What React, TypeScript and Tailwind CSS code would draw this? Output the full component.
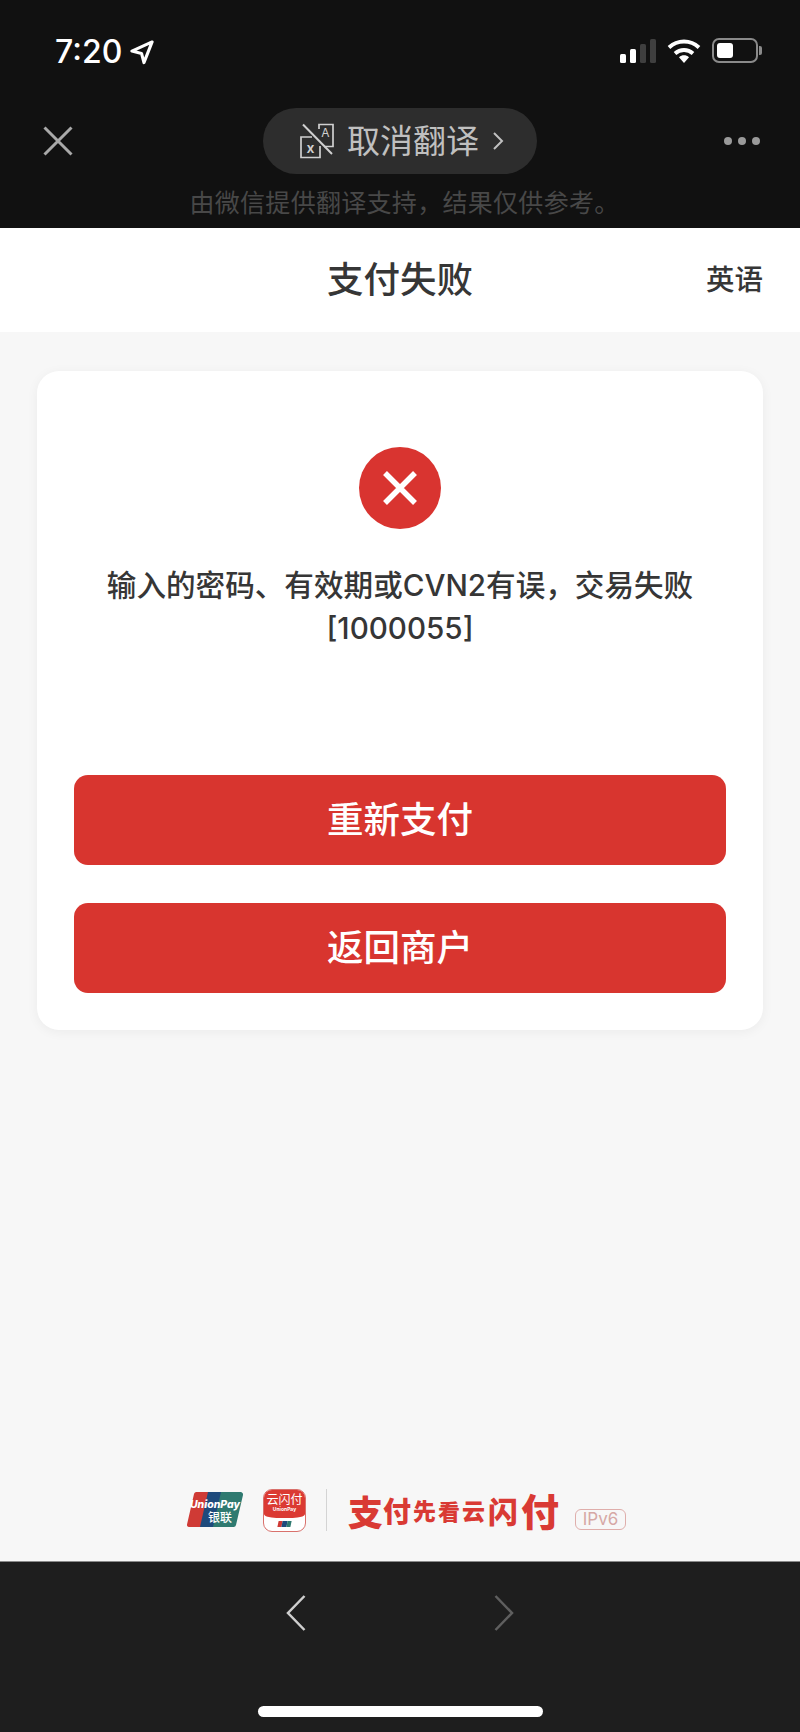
const cjk = "font-['Inter','Noto_Sans_CJK_SC',sans-serif]";

function LocationArrow() {
  return (
    <svg width="25" height="25" viewBox="0 0 26 26" fill="none" className="ml-[8px]">
      <path d="M23 2 2 11.500 12 14l2.500 9.500z" stroke="#fff" strokeWidth="3.200" strokeLinejoin="round" />
    </svg>
  );
}

function StatusIcons() {
  return (
    <div className="flex items-center">
      <svg width="36" height="24" viewBox="0 0 36 24">
        <rect x="0" y="15" width="6" height="9" rx="1.500" fill="#fff" />
        <rect x="10" y="10" width="6" height="14" rx="1.500" fill="#fff" />
        <rect x="20" y="5" width="6" height="19" rx="1.500" fill="#3f3f3f" />
        <rect x="30" y="0" width="6" height="24" rx="1.500" fill="#3f3f3f" />
      </svg>
      <svg width="34" height="25" viewBox="0 0 34 25" fill="none" className="ml-[11px]">
        <path d="M2 9.500C10.500 1.500 23.500 1.500 32 9.500" stroke="#fff" strokeWidth="3.800" />
        <path d="M8 15.500c5.200-4.700 12.800-4.700 18 0" stroke="#fff" strokeWidth="3.800" />
        <path d="M12 19.200c3-2.500 7-2.500 10 0L17 25z" fill="#fff" />
      </svg>
      <div className="ml-[11px] flex items-center">
        <div className="h-[25px] w-[46px] rounded-[7px] border-2 border-[#8a8a8a] p-[3px]">
          <div className="h-full w-[16px] rounded-[3px] bg-white" />
        </div>
        <div className="ml-[1px] h-[9px] w-[3px] rounded-r-[2px] bg-[#8a8a8a]" />
      </div>
    </div>
  );
}

function TranslateOff() {
  return (
    <svg width="34" height="36" viewBox="0 0 34 36" fill="none" stroke="#d0d0d0" strokeWidth="1.700">
      <path d="M19 6V1.500h14v22H24" />
      <path d="M12 14H1v20.500h19V23" />
      <path d="M3 1.500 32 31" strokeWidth="2" />
      <text x="25.500" y="14" fill="#d0d0d0" stroke="none" fontSize="12" textAnchor="middle" fontFamily="Inter, sans-serif">A</text>
      <text x="10.500" y="30" fill="#d0d0d0" stroke="none" fontSize="14" fontWeight="600" textAnchor="middle" fontFamily="Inter, sans-serif">x</text>
    </svg>
  );
}

function UnionPayMark() {
  return (
    <svg width="56" height="36" viewBox="0 0 56 36" className="shrink-0">
      <path d="M9 0h16l-8 35H2a2 2 0 0 1-2-2.500L7 2a2.500 2.500 0 0 1 2-2z" fill="#cf3a35" />
      <path d="M21 0h17l-8 35H13z" fill="#1e4a7c" />
      <path d="M34 0h19.500A2.500 2.500 0 0 1 56 3l-7 30a2.500 2.500 0 0 1-2.500 2H26z" fill="#2f7a70" />
      <text x="28" y="16" fill="#fff" fontSize="10.500" fontWeight="800" fontStyle="italic" textAnchor="middle" fontFamily="Inter, sans-serif">UnionPay</text>
      <text x="33" y="30" fill="#fff" fontSize="12" fontWeight="500" textAnchor="middle" fontFamily="'Noto Sans CJK SC', sans-serif">银联</text>
    </svg>
  );
}

function CloudPayMark() {
  return (
    <div className="ml-[20px] flex h-[43px] w-[43px] shrink-0 flex-col overflow-hidden rounded-[9px] border border-[#d9716c] bg-white">
      <div className="flex h-[28px] flex-col items-center rounded-b-[30%_14%] bg-[#db3a33] pt-[2px] text-white">
        <span className="text-[12px] leading-[14px] font-['Noto_Sans_CJK_SC',sans-serif]">云闪付</span>
        <span className="text-[5px] leading-[7px] font-bold font-['Inter',sans-serif]">UnionPay</span>
      </div>
      <div className="flex flex-1 items-center justify-center">
        <div className="flex h-[6px] w-[13px] -skew-x-12">
          <span className="flex-1 bg-[#cf3a35]" />
          <span className="flex-1 bg-[#1e4a7c]" />
          <span className="flex-1 bg-[#2f7a70]" />
        </div>
      </div>
    </div>
  );
}

export default function App() {
  return (
    <div className={`flex h-[1732px] w-[800px] flex-col overflow-hidden bg-[#f7f7f7] ${cjk}`}>
      <header className="flex h-[228px] shrink-0 flex-col bg-[#111111]">
        <div className="flex h-[104px] items-start justify-between pr-[38px] pl-[55px] pt-[35px]">
          <div className="flex items-center">
            <span className="text-[32px] leading-[34px] font-medium text-white">7:20</span>
            <LocationArrow />
          </div>
          <div className="pt-[3px]">
            <StatusIcons />
          </div>
        </div>
        <div className="grid grid-cols-[1fr_auto_1fr] items-center px-[40px] pt-[4px]">
          <svg width="30" height="30" viewBox="0 0 30 30" stroke="#a9a9a9" strokeWidth="3" className="ml-[3px]">
            <path d="M1.500 1.500 28.500 28.500M28.500 1.500 1.500 28.500" />
          </svg>
          <div className="flex h-[66px] w-[274px] items-center rounded-full bg-[#2d2d2d] pl-[37px]">
            <TranslateOff />
            <span className="ml-[13px] text-[33px] leading-[40px] text-[#c0c0c0]">取消翻译</span>
            <svg width="12" height="20" viewBox="0 0 12 20" fill="none" stroke="#c0c0c0" strokeWidth="2" className="ml-[13px]">
              <path d="m2 2 8 8-8 8" />
            </svg>
          </div>
          <div className="flex justify-end gap-[6px]">
            <span className="h-[8px] w-[8px] rounded-full bg-[#9a9a9a]" />
            <span className="h-[8px] w-[8px] rounded-full bg-[#9a9a9a]" />
            <span className="h-[8px] w-[8px] rounded-full bg-[#9a9a9a]" />
          </div>
        </div>
        <p className="pt-[12px] pl-[9px] text-center text-[25px] leading-[34px] tracking-[0.3px] text-[#484848]">由微信提供翻译支持，结果仅供参考。</p>
      </header>

      <div className="grid h-[104px] shrink-0 grid-cols-[1fr_auto_1fr] items-center bg-white px-[37px]">
        <span />
        <h1 className="pt-[1px] text-[36.500px] font-medium text-[#363636]">支付失败</h1>
        <span className="justify-self-end pt-[1px] text-[28.500px] font-medium text-[#363636]">英语</span>
      </div>

      <main className="flex flex-1 flex-col px-[37px] pt-[39px]">
        <section className="flex h-[659px] flex-col items-center rounded-[22px] bg-white px-[37px] pt-[76px] shadow-[0_2px_12px_rgba(0,0,0,0.05)]">
          <div className="flex h-[82px] w-[82px] items-center justify-center rounded-full bg-[#d93430]">
            <svg width="36" height="36" viewBox="0 0 36 36" stroke="#fff" strokeWidth="5.500">
              <path d="M3 3 33 33M33 3 3 33" />
            </svg>
          </div>
          <p className="mt-[35px] w-full text-center text-[29.600px] leading-[43px] font-medium text-[#363636]">
            输入的密码、有效期或CVN2有误，交易失败
            <br />
            [1000055]
          </p>
          <button className="mt-[125px] h-[90px] w-full rounded-[14px] bg-[#d8352f] pt-[1px] text-[36.500px] font-medium text-white">重新支付</button>
          <button className="mt-[38px] h-[90px] w-full rounded-[14px] bg-[#d8352f] text-[36.500px] font-medium text-white">返回商户</button>
        </section>

        <div className="mt-auto mb-[29px] flex items-center pl-[150px]">
          <UnionPayMark />
          <CloudPayMark />
          <div className="ml-[20px] h-[42px] w-[1px] bg-[#d4d4d4]" />
          <div className="ml-[21px] flex h-[44px] w-[211px] items-center font-['Noto_Sans_CJK_SC',sans-serif] font-black text-[#d93a34]">
            <span className="text-[35px] leading-none">支</span>
            <span className="text-[28px] leading-none">付</span>
            <span className="ml-[2px] text-[23px] leading-none">先</span>
            <span className="ml-[2px] text-[22px] leading-none">看</span>
            <span className="ml-[2px] text-[23px] leading-none">云</span>
            <span className="ml-[3px] text-[30px] leading-none">闪</span>
            <span className="ml-[3px] text-[38px] leading-none">付</span>
          </div>
          <div className="mt-[18px] ml-[16px] flex h-[21px] w-[51px] items-center justify-center rounded-[6px] border border-[#dfaeab] text-[17px] leading-none text-[#d6a8a5]">IPv6</div>
        </div>
      </main>

      <footer className="flex h-[171px] shrink-0 flex-col items-center border-t border-[#8a8a8a] bg-[#1e1e1e]">
        <div className="flex items-center gap-[188px] pt-[33px]">
          <svg width="20" height="36" viewBox="0 0 20 36" fill="none" stroke="#cfcfcf" strokeWidth="2.500">
            <path d="M18.500 1 2 18l16.500 17" />
          </svg>
          <svg width="20" height="36" viewBox="0 0 20 36" fill="none" stroke="#5f5f5f" strokeWidth="2.500">
            <path d="M1.500 1 18 18 1.500 35" />
          </svg>
        </div>
        <div className="mt-[75px] h-[11px] w-[285px] rounded-full bg-white" />
      </footer>
    </div>
  );
}
